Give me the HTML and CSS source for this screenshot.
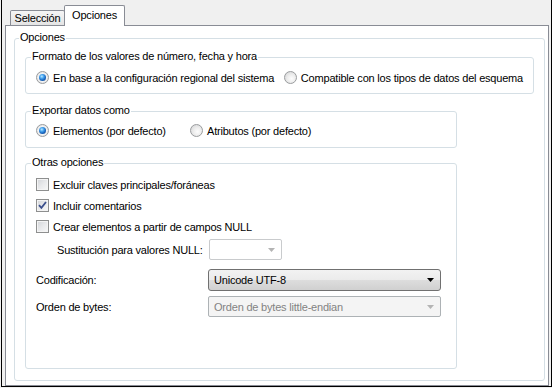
FILE: index.html
```html
<!DOCTYPE html>
<html lang="es">
<head>
    <meta charset="UTF-8">
    <title>Opciones de exportación</title>
    <link rel="stylesheet" href="styles.css">
</head>
<body>
    <div class="window">
        <div class="tabs">
            <div class="tab">Selección</div>
            <div class="tab active">Opciones</div>
        </div>

        <div class="panel">
            <div class="group outer">
                <div class="group-title">Opciones</div>

                <!-- Formato -->
                <div class="group">
                    <div class="group-title">Formato de los valores de número, fecha y hora</div>
                    <div class="choice-row">
                        <label class="choice format-first"><span class="radio checked"></span>En base a la configuración regional del sistema</label>
                        <label class="choice"><span class="radio"></span>Compatible con los tipos de datos del esquema</label>
                    </div>
                </div>

                <!-- Exportar -->
                <div class="group narrow export">
                    <div class="group-title">Exportar datos como</div>
                    <div class="choice-row">
                        <label class="choice export-first"><span class="radio checked"></span>Elementos (por defecto)</label>
                        <label class="choice"><span class="radio"></span>Atributos (por defecto)</label>
                    </div>
                </div>

                <!-- Otras opciones -->
                <div class="group narrow others">
                    <div class="group-title">Otras opciones</div>
                    <label class="check-row first"><span class="check"></span>Excluir claves principales/foráneas</label>
                    <label class="check-row"><span class="check checked"><svg width="9" height="9" viewBox="0 0 9 9"><path d="M1 4.2 L3.4 6.8 L8 1" stroke="#3b4f8c" stroke-width="1.8" fill="none"/></svg></span>Incluir comentarios</label>
                    <label class="check-row"><span class="check"></span>Crear elementos a partir de campos NULL</label>

                    <div class="field null-field">
                        <span class="field-label">Sustitución para valores NULL:</span>
                        <div class="combo disabled-white small">
                            <span class="combo-text"></span>
                            <svg class="arrow" width="7" height="4" viewBox="0 0 7 4"><path d="M0 0 H7 L3.5 4 Z" fill="#b4b4b4"/></svg>
                        </div>
                    </div>
                    <div class="field codif">
                        <span class="field-label">Codificación:</span>
                        <div class="combo active-combo">
                            <span class="combo-text">Unicode UTF-8</span>
                            <svg class="arrow" width="7" height="4" viewBox="0 0 7 4"><path d="M0 0 H7 L3.5 4 Z" fill="#000"/></svg>
                        </div>
                    </div>
                    <div class="field order">
                        <span class="field-label">Orden de bytes:</span>
                        <div class="combo disabled">
                            <span class="combo-text">Orden de bytes little-endian</span>
                            <svg class="arrow" width="7" height="4" viewBox="0 0 7 4"><path d="M0 0 H7 L3.5 4 Z" fill="#b4b4b4"/></svg>
                        </div>
                    </div>
                </div>
            </div>
        </div>
    </div>
</body>
</html>
```

FILE: styles.css
```css
* {
    margin: 0;
    padding: 0;
    box-sizing: border-box;
}

body {
    width: 552px;
    height: 388px;
    overflow: hidden;
    background: #f0f0f0;
    font-family: "Liberation Sans", Arial, sans-serif;
    font-size: 11px;
    letter-spacing: -0.2px;
    color: #000;
}

.window {
    width: 551px;
    height: 387px;
    margin-left: 1px;
    border-left: 1px solid #000;
    border-right: 1px solid #000;
    border-bottom: 1px solid #000;
    padding: 0 2px 0 3px;
    display: flex;
    flex-direction: column;
}

/* tabs */
.tabs {
    height: 25px;
    display: flex;
    align-items: flex-end;
    padding-left: 5px;
}

.tab {
    width: 55px;
    height: 15px;
    border: 1px solid #898c95;
    border-bottom: none;
    border-radius: 2px 2px 0 0;
    background: linear-gradient(#f5f5f5, #e4e4e4);
    text-align: center;
    line-height: 14px;
}

.tab.active {
    width: 61px;
    height: 21px;
    margin-left: -1px;
    margin-bottom: -1px;
    background: #fff;
    line-height: 18px;
    position: relative;
    z-index: 1;
}

/* panel */
.panel {
    height: 361px;
    background: #fff;
    border: 1px solid #898c95;
    padding: 12px 3px 4px 8px;
    display: flex;
    flex-direction: column;
}

.group {
    border: 1px solid #d5dfe5;
    border-radius: 3px;
    padding: 0 10px 9px 10px;
    margin-top: 13px;
}

.group-title {
    width: fit-content;
    background: #fff;
    padding: 0 1px;
    margin: -8px 0 0 -5px;
    line-height: 13px;
}

.outer {
    flex: 1;
    margin-top: 0;
    padding: 0 10px 11px 10px;
}

.outer > .group-title {
    margin-left: -6px;
}

.narrow {
    width: 432px;
}

.export {
    margin-top: 17px;
    padding-bottom: 10px;
}

.others {
    margin-top: 15px;
    padding-bottom: 51px;
}

/* radios */
.choice-row {
    display: flex;
    margin-top: 8px;
}

.export .choice-row {
    margin-top: 7px;
}

.choice {
    display: flex;
    align-items: center;
    gap: 4px;
    height: 13px;
    white-space: nowrap;
}

.format-first {
    width: 251px;
}

.export-first {
    width: 154px;
}

.radio {
    width: 13px;
    height: 13px;
    flex-shrink: 0;
    border-radius: 50%;
    border: 1px solid #9a9c9e;
    background: radial-gradient(circle at 60% 60%, #fdfdfd 0%, #ececec 45%, #cfd0d2 100%);
    display: flex;
    align-items: center;
    justify-content: center;
}

.radio.checked {
    background: radial-gradient(circle, #ffffff 0%, #f4f4f4 50%, #d2d3d5 100%);
}

.radio.checked::after {
    content: "";
    width: 7px;
    height: 7px;
    border-radius: 50%;
    background: radial-gradient(circle at 40% 35%, #bfe8ff 0%, #4aa8f0 30%, #1a66c0 60%, #0c3b7c 100%);
}

/* checkboxes */
.check-row {
    display: flex;
    align-items: center;
    gap: 4px;
    height: 15px;
    margin-top: 6px;
    white-space: nowrap;
}

.check-row.first {
    margin-top: 8px;
}

.check {
    width: 13px;
    height: 13px;
    flex-shrink: 0;
    border: 1px solid #8e8f8f;
    background: linear-gradient(135deg, #d2d4d8 0%, #e8e9eb 50%, #f8f8f8 100%);
    box-shadow: inset 0 0 0 1px #f4f4f4;
    display: flex;
    align-items: center;
    justify-content: center;
}

/* fields with combos */
.field {
    display: flex;
    align-items: center;
    white-space: nowrap;
}

.field-label {
    width: 172px;
}

.null-field {
    margin-top: 5px;
    padding-left: 21px;
}

.null-field .field-label {
    width: 152px;
}

.codif {
    margin-top: 9px;
}

.order {
    margin-top: 5px;
}

.combo {
    width: 233px;
    height: 21px;
    display: flex;
    align-items: center;
    padding: 0 6px 0 5px;
    border-radius: 2px;
}

.combo .arrow {
    margin-left: auto;
}

.combo.small {
    width: 73px;
}

.disabled-white {
    background: #fff;
    border: 1px solid #c9cbcd;
}

.active-combo {
    height: 22px;
    border: 1px solid #707070;
    border-radius: 3px;
    background: linear-gradient(#f2f2f2 0%, #ebebeb 50%, #dddddd 51%, #d0d0d0 100%);
}

.disabled {
    background: #f4f4f4;
    border: 1px solid #adb2b5;
    color: #838383;
}
```
